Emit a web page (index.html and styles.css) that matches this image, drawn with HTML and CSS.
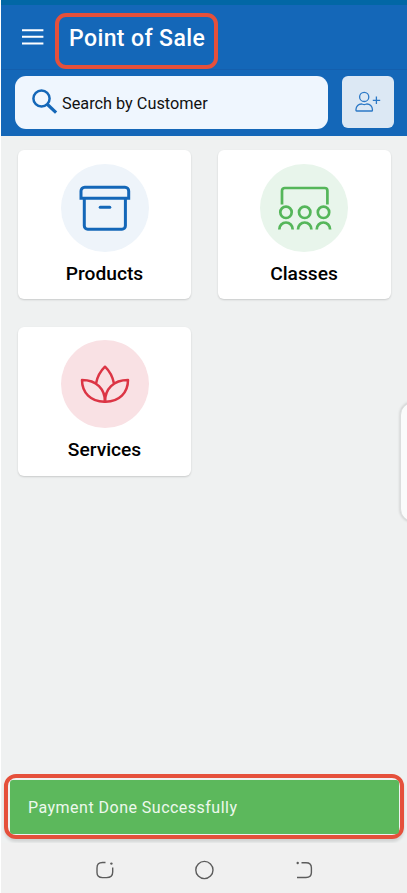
FILE: index.html
```html
<!DOCTYPE html>
<html lang="en">
<head>
  <meta charset="UTF-8" />
  <meta name="viewport" content="width=device-width, initial-scale=1.0" />
  <title>Point of Sale</title>
  <link rel="stylesheet" href="styles.css">
</head>
<body>
  <div class="screen">
    <div class="status-bar"></div>

    <header class="app-bar">
      <svg class="menu-icon" width="22" height="16" viewBox="0 0 22 16">
        <path d="M0 1.2h21.4M0 7.8h21.4M0 14.4h21.4" stroke="#fff" stroke-width="2" />
      </svg>
      <h1 class="title">Point of Sale</h1>
    </header>

    <div class="search-bar">
      <div class="search-box">
        <svg class="search-icon" width="26" height="26" viewBox="0 0 26 26" fill="none" stroke="#1467b8">
          <circle cx="9.5" cy="9.5" r="8.1" stroke-width="2.5" />
          <path d="M15.5 15.5l8.6 8.2" stroke-width="3.2" />
        </svg>
        <span class="placeholder">Search by Customer</span>
      </div>
      <button class="add-customer" aria-label="Add customer">
        <svg width="26" height="22" viewBox="0 0 26 22" fill="none" stroke="#2b78c6" stroke-width="1.3">
          <circle cx="9.2" cy="5.9" r="4.6" />
          <path d="M1 19.4v-1.2a5.4 5.4 0 0 1 5.4-5.2c1 0 1.4.6 2.8.6s1.8-.6 2.8-.6a5.4 5.4 0 0 1 5.4 5.2v1.2q0 .6-.6.6H1.6q-.6 0-.6-.6z" />
          <path d="M21.4 5.4v7.6M17.8 9.3h7.4" />
        </svg>
      </button>
    </div>

    <main class="cards">
      <div class="card">
        <div class="circle products">
          <svg width="88" height="88" viewBox="0 0 88 88" fill="none" stroke="#1467b8" stroke-width="3">
            <path d="M20 34.2V27a3.7 3.7 0 0 1 3.7-3.7H64a3.7 3.7 0 0 1 3.7 3.7v7.2z" />
            <path d="M23.3 34v27.8a3.4 3.4 0 0 0 3.4 3.4H61a3.4 3.4 0 0 0 3.4-3.4V34" />
            <path d="M39.2 43.2h9.6" stroke-linecap="round" />
          </svg>
        </div>
        <div class="label">Products</div>
      </div>

      <div class="card">
        <div class="circle classes">
          <svg width="88" height="88" viewBox="0 0 88 88" fill="none" stroke="#55b65a" stroke-width="2.7">
            <path d="M22 40.5V26.7a2.7 2.7 0 0 1 2.7-2.7h40a2.7 2.7 0 0 1 2.7 2.7v13.8" />
            <circle cx="26" cy="48.3" r="5.7" />
            <circle cx="44.7" cy="48.3" r="5.7" />
            <circle cx="63.5" cy="48.3" r="5.7" />
            <path d="M19.3 65.5a6.7 7 0 0 1 13.4 0M38 65.5a6.7 7 0 0 1 13.4 0M56.7 65.5a6.7 7 0 0 1 13.4 0" />
          </svg>
        </div>
        <div class="label">Classes</div>
      </div>

      <div class="card">
        <div class="circle services">
          <svg width="88" height="88" viewBox="0 0 88 88" fill="none" stroke="#dc3545" stroke-width="2.5" stroke-linejoin="round">
            <path d="M44 61.7C29.600 62 21 52.5 21 40C35.600 40 44 49 44 61.7z" />
            <path d="M44 61.7C58.4 62 67 52.5 67 40C52.4 40 44 49 44 61.7z" />
            <path d="M35 43.6Q37 33.4 44 26.7Q51 33.4 53 43.6" />
          </svg>
        </div>
        <div class="label">Services</div>
      </div>
    </main>

    <div class="snackbar"><div class="message">Payment Done Successfully</div></div>

    <nav class="nav-bar">
      <svg width="20" height="20" viewBox="0 0 20 20" fill="none" stroke="#5c5c5c" stroke-width="1.4">
        <path d="M11.5 2.5H8.5Q3 2.5 3 8v4.5Q3 17.6 8.5 17.6h4Q18.7 17.6 18.7 12V7.5" />
        <circle cx="17.4" cy="3.6" r="1.2" fill="#5c5c5c" stroke="none" />
      </svg>
      <svg width="20" height="20" viewBox="0 0 20 20" fill="none" stroke="#5c5c5c" stroke-width="1.4">
        <circle cx="10.4" cy="10" r="8.6" />
      </svg>
      <svg width="20" height="20" viewBox="0 0 20 20" fill="none" stroke="#5c5c5c" stroke-width="1.4">
        <path d="M7.5 2.8H12Q17.4 2.8 17.4 7.8v4.8Q17.4 17.5 12 17.5H3" />
        <circle cx="3.7" cy="3" r="1.2" fill="#5c5c5c" stroke="none" />
      </svg>
    </nav>

    <div class="edge-handle"></div>
  </div>
</body>
</html>
```
FILE: styles.css
```css
* {
  box-sizing: border-box;
}

body {
  margin: 0;
  background-color: #fff;
  font-family: Roboto, "Liberation Sans", sans-serif;
}

.screen {
  position: relative;
  display: flex;
  flex-direction: column;
  height: 893px;
  margin-left: 1px;
  background-color: #eff1f1;
  overflow: hidden;
}

.status-bar {
  height: 5px;
  background-color: #0267a5;
}

.app-bar {
  display: flex;
  align-items: flex-start;
  height: 64px;
  padding: 8px 0 0 21px;
  background-color: #1467b8;
}

.menu-icon {
  margin-top: 16px;
}

/* red outline around the page title */
.title {
  width: 163px;
  height: 56px;
  margin: 0 0 0 11px;
  padding-left: 10px;
  border: 4px solid #e5503b;
  border-radius: 11px;
  color: #fff;
  font-size: 23px;
  font-weight: 500;
  letter-spacing: 0.4px;
  line-height: 43px;
  white-space: nowrap;
}

.search-bar {
  display: flex;
  gap: 14px;
  height: 67px;
  padding: 6px 0 0 14px;
  background-color: #1467b8;
  border-top: 1px solid #145fae;
}

.search-box {
  display: flex;
  align-items: center;
  width: 313px;
  height: 53px;
  padding-left: 17px;
  background-color: #eff6fe;
  border-radius: 11px;
  color: #111;
  font-size: 16.3px;
}

.search-icon {
  margin: -1px 4px 0 0;
}

.placeholder {
  padding-top: 2px;
}

.add-customer {
  display: flex;
  align-items: center;
  justify-content: center;
  width: 52px;
  height: 52px;
  padding: 0 1px 0 0;
  background-color: #dce8f4;
  border: 0;
  border-radius: 6px;
}

.cards {
  display: grid;
  grid-template-columns: 173px 173px;
  grid-auto-rows: 149px;
  gap: 27.5px 26.5px;
  flex-grow: 1;
  align-content: start;
  padding: 14px 0 0 17px;
}

.card {
  display: flex;
  flex-direction: column;
  align-items: center;
  padding-top: 13.5px;
  background-color: #fff;
  border-radius: 6px;
  box-shadow: 0 1px 2px rgba(0, 0, 0, 0.16);
}

.circle {
  width: 88px;
  height: 88px;
  border-radius: 50%;
}

.circle svg {
  display: block;
}

.products { background-color: #eef4fa; }
.classes  { background-color: #e8f5eb; }
.services { background-color: #f9e1e4; }

.label {
  margin-top: 10px;
  color: #000;
  font-size: 19.2px;
  font-weight: 500;
  line-height: 24px;
}

.snackbar {
  height: 65px;
  margin: 0 3px 0 3px;
  padding: 2px 1px 1px 2px;
  background-color: #eff1f1;
  border: 4px solid #e5503b;
  border-radius: 12px;
  box-shadow: 0 3px 3px rgba(0, 0, 0, 0.12);
}

.message {
  height: 54px;
  padding-left: 18px;
  background-color: #5cb85c;
  border-radius: 3px;
  color: #edf8ed;
  font-size: 16px;
  letter-spacing: 0.48px;
  line-height: 56px;
}

.nav-bar {
  display: flex;
  justify-content: center;
  gap: 80px;
  height: 50px;
  margin-top: 4px;
  padding-top: 17px;
  background-color: #f0f0f0;
}

.edge-handle {
  position: absolute;
  top: 402px;
  right: -24px;
  width: 31px;
  height: 120px;
  background-color: #fafbfb;
  border: 1px solid #dcdede;
  border-radius: 13px;
  box-shadow: 0 0 3px rgba(0, 0, 0, 0.2);
}
```
